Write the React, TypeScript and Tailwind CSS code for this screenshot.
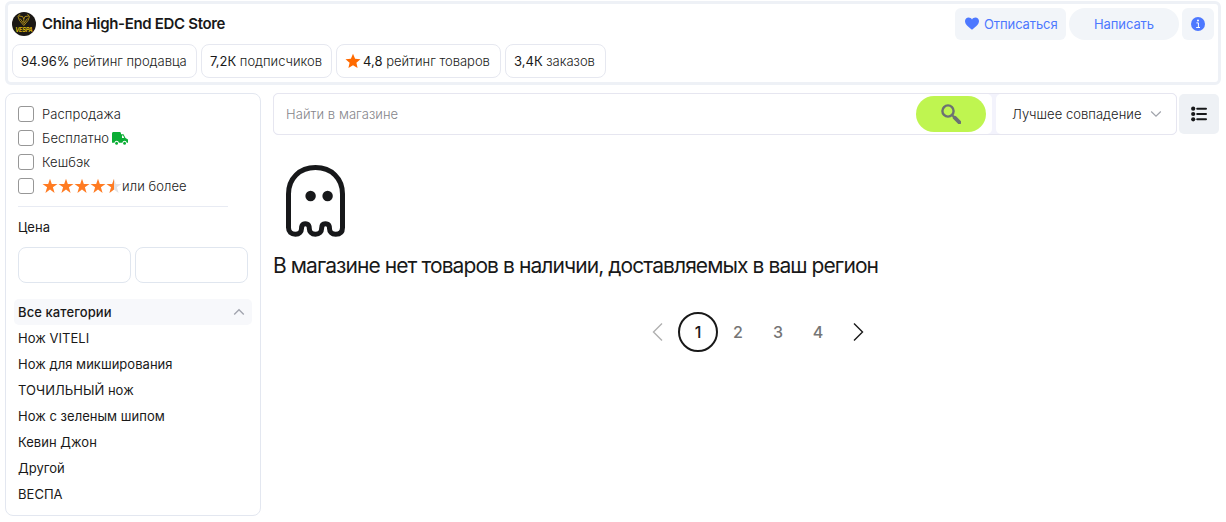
import type { ReactNode } from "react";

const filters = ["Распродажа", "Бесплатно", "Кешбэк"];

const categories = [
  "Нож VITELI",
  "Нож для микширования",
  "ТОЧИЛЬНЫЙ нож",
  "Нож с зеленым шипом",
  "Кевин Джон",
  "Другой",
  "ВЕСПА",
];

function Star({ className }: { className: string }) {
  return (
    <svg viewBox="0 0 16 16" className={className}>
      <path d="M8 .8 10.1 5.7 15.5 6.2 11.4 9.8 12.6 15 8 12.2 3.4 15 4.6 9.8.5 6.2 5.9 5.7Z" fill="currentColor" />
    </svg>
  );
}

// thinner star used in the rating filter
function RatingStar({ half }: { half?: boolean }) {
  return (
    <svg viewBox="0 0 16 16" className="h-4 w-4">
      <path d="M8 .8 9.8 6H15.5L10.9 9.3 12.6 15 8 11.6 3.4 15 5.1 9.3.5 6H6.2Z" fill={half ? "#e2e2e4" : "currentColor"} />
      {half && <path d="M8 .8V11.6L3.4 15 5.1 9.3.5 6H6.2Z" fill="currentColor" />}
    </svg>
  );
}

function StoreLogo() {
  return (
    <svg viewBox="0 0 24 24" className="h-6 w-6 shrink-0">
      <circle cx="12" cy="12" r="12" fill="#1b1815" />
      <g fill="none" stroke="#b8961a" strokeWidth=".9">
        <path d="M8 2.2 6 4.5 7.5 8.5 11.8 13.5 16 8.5 17.5 4.5 15.5 2.2" />
        <path d="M6.5 4 10.5 4.5 11.8 7 13 4.5 17 4M8 6.5 11.8 11.5 15.5 6.5M11.8 7V10" />
      </g>
      <text x="3.2" y="20.3" textLength="17.6" fill="#dcb80c" fontSize="5.6" fontWeight="700" fontStyle="italic" fontFamily="Inter, sans-serif">
        VESPA
      </text>
    </svg>
  );
}

function Chip({ className, children }: { className: string; children: ReactNode }) {
  return (
    <div className={`flex h-[34px] items-center rounded-[8px] border border-[#e6e8f0] pt-px pl-2 text-[13px] font-light whitespace-pre ${className}`}>
      {children}
    </div>
  );
}

function Checkbox() {
  return <span className="h-4 w-4 shrink-0 rounded-[3px] border border-[#979797] bg-white" />;
}

function Header() {
  return (
    <header className="flex h-[84px] w-[1216px] justify-between rounded-[6px] border-[3px] border-[#eef1f6] pt-1 pr-1 pl-1">
      <div>
        <div className="flex h-8 items-center gap-[6px]">
          <StoreLogo />
          <h1 className="text-[15px] font-semibold tracking-[-0.33px]">China High-End EDC Store</h1>
        </div>
        <div className="mt-1 flex gap-1">
          <Chip className="w-[185px]"><span className="font-normal">94.96%</span> рейтинг продавца</Chip>
          <Chip className="w-[131px]"><span className="font-normal">7,2К</span> подписчиков</Chip>
          <Chip className="w-[165px]">
            <Star className="mr-[2px] mb-[2px] h-4 w-4 text-[#ff6a00]" />
            <span className="font-normal">4,8</span> рейтинг товаров
          </Chip>
          <Chip className="w-[101px]"><span className="font-normal">3,4К</span> заказов</Chip>
        </div>
      </div>
      <div className="flex gap-[3px] text-[13px] text-[#4d78ff]">
        <button className="flex h-8 w-[111px] items-center rounded-[6px] bg-[#f2f5f9] pl-[9px]">
          <svg viewBox="0 0 16 16" className="mr-1 h-4 w-4 text-[#4d78ff]">
            <path d="M8 13.7C3.5 10.3 1 8.2 1 5.1 1 3 2.6 1.5 4.6 1.5 6 1.5 7.3 2.2 8 3.4 8.7 2.2 10 1.5 11.4 1.5 13.4 1.5 15 3 15 5.1 15 8.2 12.5 10.3 8 13.7Z" fill="currentColor" />
          </svg>
          <span className="pt-px tracking-[-0.1px]">Отписаться</span>
        </button>
        <button className="h-8 w-[110px] rounded-full bg-[#f2f5f9] pt-px tracking-[-0.1px]">Написать</button>
        <button className="flex h-8 w-8 items-center justify-center rounded-[6px] bg-[#f2f5f9]">
          <svg viewBox="0 0 14 14" className="h-[14px] w-[14px]">
            <circle cx="7" cy="7" r="7" fill="#4d78ff" />
            <circle cx="7" cy="3.6" r="1" fill="#fff" />
            <path d="M5.4 5.9H7.4V10.3M5.2 10.5H9" stroke="#fff" strokeWidth="1" fill="none" />
          </svg>
        </button>
      </div>
    </header>
  );
}

function Sidebar() {
  return (
    <aside className="h-[423px] w-64 shrink-0 rounded-[8px] border border-[#e3e7f0] px-3 pt-2">
      <div className="text-[13px] font-light tracking-[0.08px]">
        {filters.map((name) => (
          <label key={name} className="flex h-6 items-center gap-2">
            <Checkbox />
            <span className="flex items-center pt-px">
              {name}
              {name === "Бесплатно" && (
                <svg viewBox="0 0 16 12" preserveAspectRatio="none" className="mb-px ml-[3px] h-[13px] w-4">
                  <path d="M1.5 0H7.5C8.5 0 9 .6 9 1.5V2H11.5L13.5 5.5 16 7V10H14.8A2.3 2.3 0 0 0 10.3 10H6.9A2.3 2.3 0 0 0 2.4 10H0V1.5C0 .6.6 0 1.5 0Z" fill="#0bad35" />
                  <path d="M10 3.2H11.1L12.2 5.6H10Z" fill="#fff" />
                  <circle cx="4.6" cy="10.4" r="1.4" fill="#0bad35" />
                  <circle cx="12.6" cy="10.4" r="1.4" fill="#0bad35" />
                </svg>
              )}
            </span>
          </label>
        ))}
        <label className="flex h-6 items-center">
          <Checkbox />
          <span className="ml-2 flex text-[#ff7b22]">
            <RatingStar />
            <RatingStar />
            <RatingStar />
            <RatingStar />
            <RatingStar half />
          </span>
          <span className="pt-px">или более</span>
        </label>
      </div>
      <hr className="mt-2 w-[210px] border-[#e8ebf3]" />
      <div className="mt-[10px] text-[13px] leading-5">Цена</div>
      <div className="mt-[10px] flex gap-1">
        <input className="h-9 w-[113px] rounded-[8px] border border-[#e0e6ef]" />
        <input className="h-9 w-[113px] rounded-[8px] border border-[#e0e6ef]" />
      </div>
      <div className="mt-4 -ml-1 flex h-[26px] w-[238px] items-center justify-between rounded-[5px] bg-[#f7f8fb] pr-[7px] pl-1 text-[13px] font-medium">
        <span className="pt-px tracking-[0.1px]">Все категории</span>
        <svg viewBox="0 0 12 8" className="h-2 w-3">
          <path d="M1.2 6.4 6 1.8 10.8 6.4" fill="none" stroke="#a2a5af" strokeWidth="1.4" />
        </svg>
      </div>
      <ul className="text-[13px] leading-[26px] tracking-[0.03px]">
        {categories.map((name) => (
          <li key={name}>{name}</li>
        ))}
      </ul>
    </aside>
  );
}

function Toolbar() {
  return (
    <div className="flex items-center gap-[2px]">
      <div className="flex h-[42px] w-[904px] justify-between rounded-[5px] border border-[#e6e6f0] bg-[#f3f3fc]">
        <div className="flex w-[718px] items-center justify-between rounded-[5px] bg-white pr-[6px] pl-3">
          <span className="pt-px text-[13px] font-light tracking-[0.06px] text-[#85858a]">Найти в магазине</span>
          <button className="flex h-9 w-[70px] items-center justify-center rounded-full bg-[#bff550]">
            <svg viewBox="0 0 20 20" className="h-5 w-5" fill="none" stroke="#6c7173">
              <circle cx="7" cy="7" r="5.6" strokeWidth="2.4" />
              <path d="M11.2 11.2 13.5 13.5" strokeWidth="2" />
              <path d="M13.7 13.7 18.4 18.4" strokeWidth="3.8" strokeLinecap="round" />
            </svg>
          </button>
        </div>
        <div className="flex w-[180px] items-center justify-between rounded-[5px] bg-white pr-[14px] pl-4">
          <span className="pt-px text-[13px] font-light tracking-[0.04px]">Лучшее совпадение</span>
          <svg viewBox="0 0 12 8" className="h-2 w-3">
            <path d="M1.2 1.5 6 6.1 10.8 1.5" fill="none" stroke="#a0a3ab" strokeWidth="1.2" />
          </svg>
        </div>
      </div>
      <button className="flex h-10 w-10 items-center justify-center rounded-[5px] bg-[#eef1f5]">
        <svg viewBox="0 0 16 16" className="h-4 w-4" fill="none" stroke="#17181a" strokeWidth="2" strokeLinecap="round">
          <path d="M6.2 2.7H15M6.2 8H15M6.2 13.3H15" />
          <g fill="#17181a" stroke="none">
            <circle cx="2.2" cy="2.7" r="2.1" />
            <circle cx="2.2" cy="8" r="2.1" />
            <circle cx="2.2" cy="13.3" r="2.1" />
          </g>
        </svg>
      </button>
    </div>
  );
}

function Pagination() {
  return (
    <nav className="mt-8 flex h-10 pl-[375px] text-[16px] font-medium text-[#757575]">
      <button className="flex w-[30px] items-center pl-1">
        <svg viewBox="0 0 11 20" className="h-5 w-[11px]">
          <path d="M10 1.5 1.5 10 10 18.5" fill="none" stroke="#b0b0b0" strokeWidth="1.4" />
        </svg>
      </button>
      <button className="w-10 rounded-full border-2 border-[#191919] text-[#191919]">1</button>
      <button className="w-10">2</button>
      <button className="w-10">3</button>
      <button className="w-10">4</button>
      <button className="flex w-10 items-center justify-center">
        <svg viewBox="0 0 11 20" className="h-5 w-[11px]">
          <path d="M1 1.5 9.5 10 1 18.5" fill="none" stroke="#191919" strokeWidth="1.4" />
        </svg>
      </button>
    </nav>
  );
}

export default function App() {
  return (
    <div className="h-[522px] w-[1226px] bg-white pt-px pl-[5px] font-['Inter',sans-serif] text-[#191919]">
      <Header />
      <div className="mt-2 flex gap-3">
        <Sidebar />
        <main>
          <Toolbar />
          <svg viewBox="0 0 60 72" className="mt-[30px] ml-[13px] h-[72px] w-[60px]">
            <path
              d="M2.5 29C2.5 13.5 13.5 2.5 29.5 2.5S56.5 13.5 56.5 29V62.5C56.5 66.8 54.2 69.3 49.7 69.3 45.5 69.3 43.5 66.5 43.5 63.5 43.5 61.5 43.2 58.8 39.3 58.8 36 58.8 35.6 61.5 35.6 63.5 35.6 66.7 33.5 69.3 29.5 69.3S23.3 66.5 23.3 63.5C23.3 61.5 22.8 58.8 19.3 58.8 15.8 58.8 15.5 61.5 15.5 63.5 15.5 66.5 13.5 69.3 9.4 69.3 5.2 69.3 2.5 66.8 2.5 62.5Z"
              fill="none"
              stroke="#17181a"
              strokeWidth="5"
            />
            <circle cx="24.6" cy="31" r="5.2" fill="#17181a" />
            <circle cx="41.6" cy="31" r="5.2" fill="#17181a" />
          </svg>
          <h2 className="mt-[15px] text-[21px] leading-7 tracking-[-0.92px] whitespace-nowrap">
            В магазине нет товаров в наличии, доставляемых в ваш регион
          </h2>
          <Pagination />
        </main>
      </div>
    </div>
  );
}
